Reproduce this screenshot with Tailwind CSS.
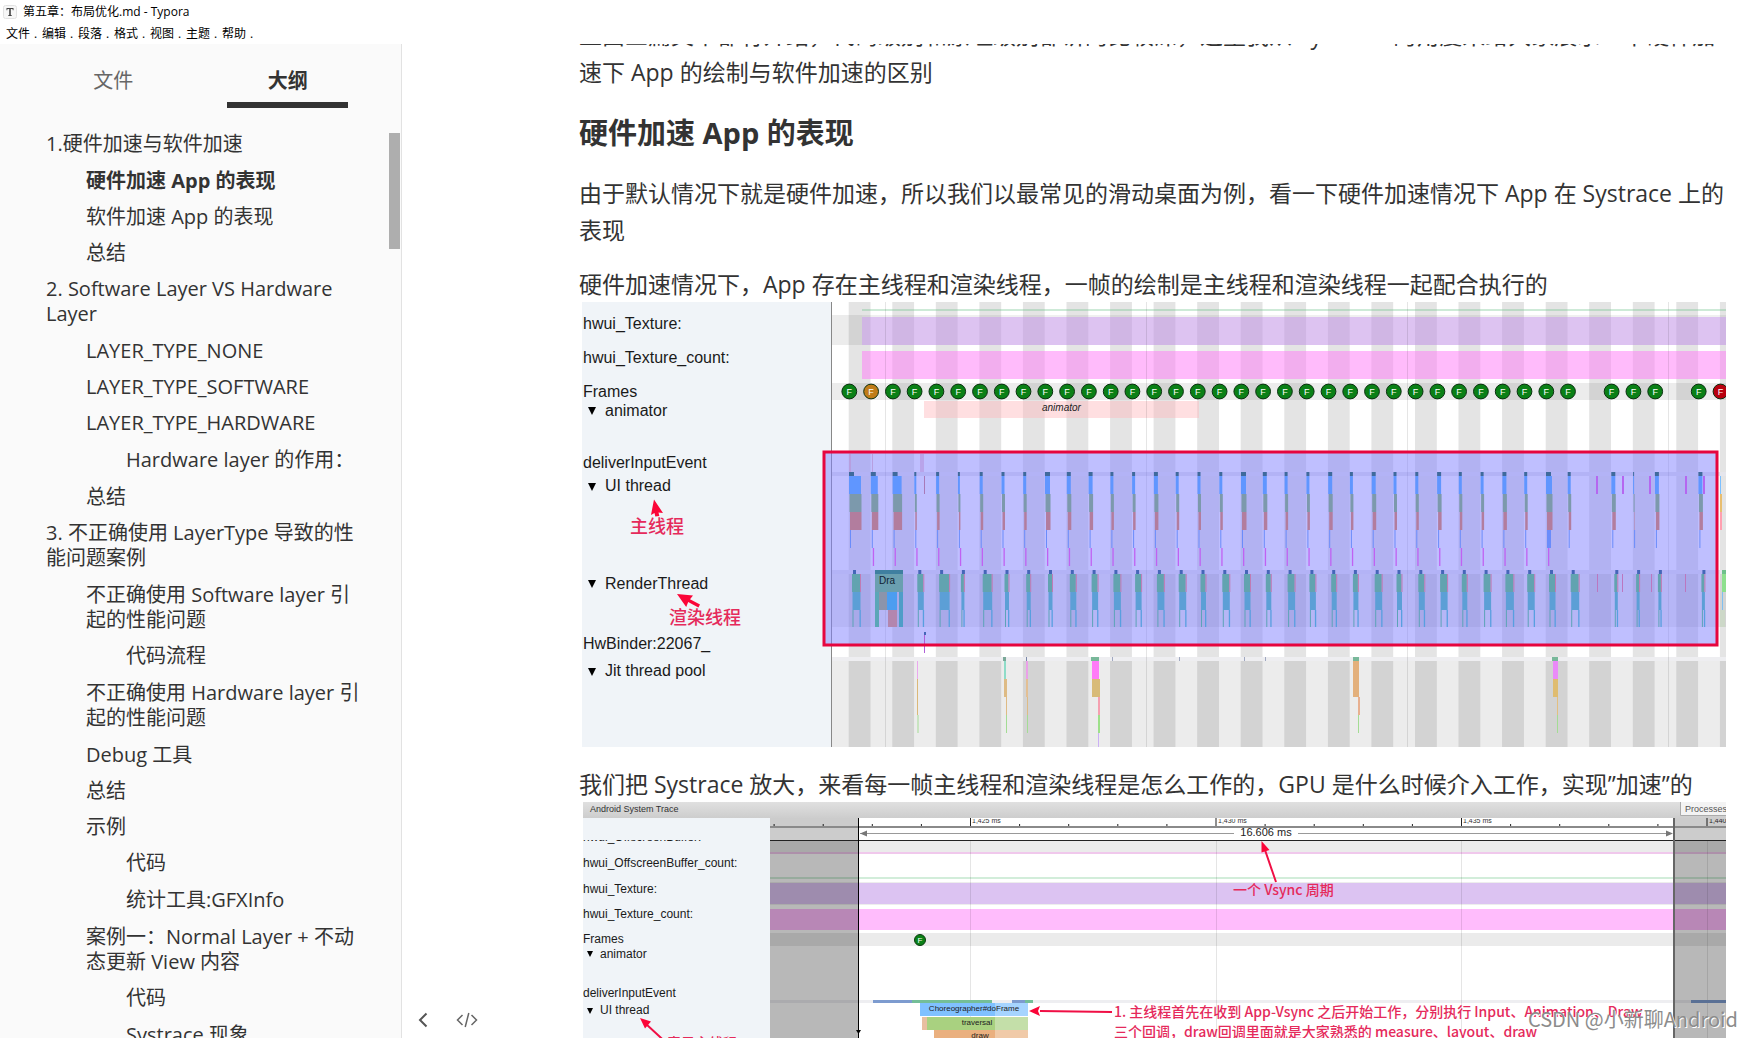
<!DOCTYPE html>
<html lang="zh-CN">
<head>
  <meta charset="UTF-8" />
  <meta name="viewport" content="width=device-width, initial-scale=1.0" />
  <title>第五章：布局优化.md - Typora</title>
  <script src="https://cdn.jsdelivr.net/npm/@tailwindcss/browser@4"></script>
</head>
<body class="bg-white h-screen flex flex-col overflow-hidden text-[#333] font-['Open_Sans','Noto_Sans_CJK_SC',sans-serif]">
  <!-- Title bar + menu -->
  <header class="text-black text-xs">
    <div class="h-6 flex items-center gap-1.5 pl-[3px]">
      <svg class="w-3.5 h-3.5" viewBox="0 0 14 14" aria-hidden="true">
        <rect x=".5" y=".5" width="13" height="13" rx="2" fill="#f7f7f7" stroke="#e2e2e2" />
        <path d="M3.5 3h7v2.2h-.7L9.500 4H7.800v6l1 .3v.7H5.200v-.7l1-.3V4H4.500l-.3 1.200h-.7z" fill="#444" />
      </svg>
      <span>第五章：布局优化.md - Typora</span>
    </div>
    <nav class="h-5 flex items-center pl-1.5">
      <button class="w-9 text-left whitespace-nowrap">文件<span class="pl-1">.</span></button>
      <button class="w-9 text-left whitespace-nowrap">编辑<span class="pl-1">.</span></button>
      <button class="w-9 text-left whitespace-nowrap">段落<span class="pl-1">.</span></button>
      <button class="w-9 text-left whitespace-nowrap">格式<span class="pl-1">.</span></button>
      <button class="w-9 text-left whitespace-nowrap">视图<span class="pl-1">.</span></button>
      <button class="w-9 text-left whitespace-nowrap">主题<span class="pl-1">.</span></button>
      <button class="w-9 text-left whitespace-nowrap">帮助<span class="pl-1">.</span></button>
    </nav>
  </header>

  <div class="flex-1 min-h-0 flex">
    <!-- Sidebar -->
    <aside class="relative w-[402px] shrink-0 bg-[#fafafa] border-r border-[#e2e2e2] overflow-hidden text-xl leading-[25px]">
      <div class="flex px-[26px] pt-6">
        <button class="flex-1 text-[#666] pb-5">文件</button>
        <button class="flex-1 font-bold flex flex-col items-center">
          <span class="pb-[9px]">大纲</span>
          <span class="w-[121px] h-1.5 bg-[#333]"></span>
        </button>
      </div>
      <ul class="pt-3 pl-[46px] whitespace-nowrap">
        <li class="py-1.5"><a href="#a1">1.硬件加速与软件加速</a></li>
        <li class="pt-1.5 pb-[5px] pl-10 font-bold"><a href="#a2">硬件加速 App 的表现</a></li>
        <li class="pt-1.5 pb-[5px] pl-10"><a href="#a3">软件加速 App 的表现</a></li>
        <li class="pt-1.5 pb-[5px] pl-10"><a href="#a4">总结</a></li>
        <li class="py-1.5"><a href="#b1">2. Software Layer VS Hardware<br />Layer</a></li>
        <li class="pt-1.5 pb-[5px] pl-10"><a href="#b2">LAYER_TYPE_NONE</a></li>
        <li class="pt-1.5 pb-[5px] pl-10"><a href="#b3">LAYER_TYPE_SOFTWARE</a></li>
        <li class="py-1.5 pl-10"><a href="#b4">LAYER_TYPE_HARDWARE</a></li>
        <li class="py-1.5 pl-20"><a href="#b5">Hardware layer 的作用：</a></li>
        <li class="pt-1.5 pb-[5px] pl-10"><a href="#b6">总结</a></li>
        <li class="py-1.5"><a href="#c1">3. 不正确使用 LayerType 导致的性<br />能问题案例</a></li>
        <li class="pt-1.5 pb-[5px] pl-10"><a href="#c2">不正确使用 Software layer 引<br />起的性能问题</a></li>
        <li class="py-1.5 pl-20"><a href="#c3">代码流程</a></li>
        <li class="py-1.5 pl-10"><a href="#c4">不正确使用 Hardware layer 引<br />起的性能问题</a></li>
        <li class="pt-1.5 pb-[5px] pl-10"><a href="#c5">Debug 工具</a></li>
        <li class="pt-1.5 pb-[5px] pl-10"><a href="#c6">总结</a></li>
        <li class="pt-1.5 pb-[5px] pl-10"><a href="#c7">示例</a></li>
        <li class="py-1.5 pl-20"><a href="#c8">代码</a></li>
        <li class="py-1.5 pl-20"><a href="#c9">统计工具:GFXInfo</a></li>
        <li class="pt-1.5 pb-[5px] pl-10"><a href="#d1">案例一：Normal Layer + 不动<br />态更新 View 内容</a></li>
        <li class="py-1.5 pl-20"><a href="#d2">代码</a></li>
        <li class="py-1.5 pl-20"><a href="#d3">Systrace 现象</a></li>
      </ul>
      <!-- scrollbar thumb -->
      <div class="absolute right-px top-[89px] w-[11px] h-[116px] bg-[#aeaeae]"></div>
    </aside>

    <!-- Editor -->
    <main class="relative flex-1 min-w-0 overflow-hidden pl-[177px] pr-[26px]">
      <article class="-mt-[27px] text-[23px] leading-[37px]">
        <p>上面三篇文章都有介绍，代码级别和原理级别都讲的比较深，这里我从 Systrace 的角度来给大家展示一下硬件加速下 App 的绘制与软件加速的区别</p>
        <h3 id="a2" class="mt-[22px] text-[29px] leading-10 font-bold">硬件加速 App 的表现</h3>
        <p class="mt-[22px]">由于默认情况下就是硬件加速，所以我们以最常见的滑动桌面为例，看一下硬件加速情况下 App 在 Systrace 上的表现</p>
        <p class="mt-5 pb-0.5 leading-[31px]">硬件加速情况下，App 存在主线程和渲染线程，一帧的绘制是主线程和渲染线程一起配合执行的</p>

        <div class="pl-[3px]">
          <svg class="block w-full font-['Liberation_Sans',sans-serif]" viewBox="582 302 1144 445" font-size="16">
            <rect x="582" y="302" width="1144" height="445" fill="#fff" />
            <g id="stripes" fill="#e4e4e4"></g>
            <!-- counters and frame row -->
            <g fill="#000" fill-opacity=".075">
              <rect x="832" y="315" width="30" height="30" />
              <rect x="832" y="383" width="894" height="17" />
            </g>
            <rect x="862" y="309" width="864" height="2" fill="#6fc38c" fill-opacity=".35" />
            <rect x="862" y="315" width="864" height="2" fill="#000" fill-opacity=".06" />
            <rect x="862" y="317" width="864" height="28" fill="#bc88e4" fill-opacity=".5" />
            <rect x="862" y="351" width="864" height="28" fill="#ff78f7" fill-opacity=".5" />
            <rect x="924" y="401" width="275" height="17" fill="#ffb9bd" fill-opacity=".45" />
            <text x="1042" y="411" font-size="10" font-style="italic" fill="#222">animator</text>
            <!-- thread rows -->
            <rect x="832" y="472" width="894" height="4" fill="#e6e6ec" />
            <rect x="832" y="570" width="894" height="57" fill="#000" fill-opacity=".075" />
            <rect x="832" y="570" width="894" height="4" fill="#e6e6ec" />
            <rect x="832" y="657" width="894" height="90" fill="#000" fill-opacity=".075" />
            <rect x="832" y="657" width="894" height="4" fill="#eeeef1" />
            <g id="gridlines" fill="#000" fill-opacity=".1"></g>
            <g id="jit"></g>
            <rect x="582" y="302" width="249" height="445" fill="#f0f4f8" />
            <rect x="831" y="302" width="1" height="445" fill="#888" />
            <rect x="824" y="452" width="893" height="193" fill="#8080ff" fill-opacity=".5" />
            <g id="slices"></g>
            <text x="879" y="584" font-size="10" fill="#123">Dra</text>
            <rect x="824" y="452" width="893" height="193" fill="none" stroke="#e6053f" stroke-width="3" />
            <g id="frames" font-size="9" text-anchor="middle"></g>
            <g fill="#1a1a1a">
              <text x="583" y="329">hwui_Texture:</text>
              <text x="583" y="363">hwui_Texture_count:</text>
              <text x="583" y="397">Frames</text>
              <text x="605" y="416">animator</text>
              <text x="583" y="468">deliverInputEvent</text>
              <text x="605" y="491">UI thread</text>
              <text x="605" y="589">RenderThread</text>
              <text x="583" y="649">HwBinder:22067_</text>
              <text x="605" y="676">Jit thread pool</text>
            </g>
            <path d="M588 407h8l-4 8zM588 483h8l-4 8zM588 580h8l-4 8zM588 668h8l-4 8z" fill="#000" />
            <g fill="#fb0538">
              <path d="M654 499.500l9 13.500-4.500-.5.800 3.500-4 .5-.8-3.500-3.500 2z" />
              <path d="M677 594l16 1.500-3 3.700 10 5.300-1.600 3-10.200-5.400-2 5z" />
            </g>
            <g fill="#e52a5b" font-size="18" class="font-medium font-['Noto_Sans_CJK_SC',sans-serif]">
              <text x="630" y="533">主线程</text>
              <text x="669" y="624">渲染线程</text>
            </g>
          </svg>
        </div>

        <p class="mt-[22px] pb-0.5 leading-[31px]">我们把 Systrace 放大，来看每一帧主线程和渲染线程是怎么工作的，GPU 是什么时候介入工作，实现”加速”的</p>

        <div class="pl-1">
          <svg class="block w-full font-['Liberation_Sans',sans-serif]" viewBox="583 802 1143 260" font-size="12">
            <defs>
              <linearGradient id="bar" x1="0" y1="0" x2="0" y2="1">
                <stop offset="0" stop-color="#e0e0e0" />
                <stop offset="1" stop-color="#cdcdcd" />
              </linearGradient>
              <clipPath id="underRuler"><rect x="583" y="840" width="190" height="10" /></clipPath>
              <clipPath id="ruler"><rect x="770" y="819" width="956" height="9" /></clipPath>
            </defs>
            <rect x="583" y="802" width="1143" height="260" fill="#fff" />
            <rect x="770" y="841" width="956" height="11" fill="#ebebeb" />
            <rect x="770" y="852" width="956" height="2" fill="#f0c8ec" />
            <rect x="770" y="877" width="956" height="2" fill="#d2edda" />
            <rect x="770" y="882" width="956" height="23" fill="#ededed" />
            <rect x="770" y="883" width="956" height="21" fill="#dcc3f2" />
            <rect x="770" y="909" width="956" height="21" fill="#ffbcfc" />
            <rect x="770" y="933" width="956" height="13" fill="#ebebeb" />
            <rect x="770" y="1000" width="956" height="3" fill="#eeeef1" />
            <path d="M970.500 841v221M1216.500 841v221M1461.500 841v221M1707.500 841v221" stroke="#000" stroke-opacity=".1" />
            <!-- main thread slices -->
            <path d="M873 1000h39v3h-39zM1012 1000h13v3h-13zM1691 1000h35v3h-35z" fill="#7d9bcf" />
            <path d="M912 1000h80v3h-80zM1025 1000h8v3h-8z" fill="#74be98" />
            <rect x="920" y="1003" width="108" height="13" fill="#80c1ff" />
            <rect x="995" y="1003" width="33" height="13" fill="#a6d4ff" />
            <rect x="922" y="1017" width="5" height="13" fill="#e8bfa0" />
            <rect x="927" y="1017" width="101" height="13" fill="#a9d180" />
            <rect x="995" y="1017" width="33" height="13" fill="#c4dfa9" />
            <rect x="934" y="1030" width="94" height="32" fill="#eab07f" />
            <rect x="995" y="1030" width="33" height="32" fill="#f0caa8" />
            <g font-size="8" text-anchor="middle" fill="#222">
              <text x="974" y="1011">Choreographer#doFrame</text>
              <text x="977" y="1025">traversal</text>
              <text x="980" y="1038">draw</text>
            </g>
            <circle cx="920" cy="940" r="5.500" fill="#0a8016" stroke="#0b3d10" />
            <text x="920" y="943" font-size="8" text-anchor="middle" fill="#fff">F</text>
            <!-- ruler -->
            <g id="ticks" fill="#222"></g>
            <g font-size="7" fill="#333" clip-path="url(#ruler)">
              <text x="972" y="823">1,425 ms</text>
              <text x="1218" y="823">1,430 ms</text>
              <text x="1463" y="823">1,435 ms</text>
              <text x="1709" y="823">1,440 ms</text>
            </g>
            <path d="M860 833.500h374M1298 833.500h374" stroke="#999" />
            <path d="M860 833.500l7-3v6zM1673 833.500l-7-3v6z" fill="#777" />
            <text x="1266" y="836" font-size="11" text-anchor="middle" fill="#222">16.606 ms</text>
            <!-- dimmed area outside the selection -->
            <path d="M770 818h88v22h-88zM1674 818h52v22h-52z" fill="#000" fill-opacity=".2" />
            <path d="M770 841h88v221h-88zM1674 841h52v221h-52z" fill="#000" fill-opacity=".28" />
            <rect x="770" y="826" width="956" height="2" fill="#8a8a8a" />
            <rect x="770" y="840" width="956" height="1" fill="#222" />
            <rect x="858" y="818" width="1" height="244" fill="#000" />
            <path d="M856 1030h5l-2.500 4z" fill="#000" />
            <rect x="1673" y="818" width="2" height="244" fill="#666" />
            <rect x="583" y="818" width="187" height="244" fill="#f0f4f8" />
            <rect x="583" y="802" width="1143" height="16" fill="url(#bar)" />
            <text x="590" y="812" font-size="9" fill="#333">Android System Trace</text>
            <path d="M1680.500 802v13.500h46" fill="#f3f3f3" stroke="#aaa" />
            <rect x="1681" y="802" width="45" height="13" fill="#f3f3f3" />
            <text x="1685" y="812" font-size="9" fill="#555">Processes</text>
            <g fill="#1a1a1a">
              <text x="583" y="841" clip-path="url(#underRuler)">hwui_OffscreenBuffer:</text>
              <text x="583" y="867">hwui_OffscreenBuffer_count:</text>
              <text x="583" y="893">hwui_Texture:</text>
              <text x="583" y="918">hwui_Texture_count:</text>
              <text x="583" y="943">Frames</text>
              <text x="600" y="958">animator</text>
              <text x="583" y="997">deliverInputEvent</text>
              <text x="600" y="1014">UI thread</text>
            </g>
            <path d="M587 951h6l-3 6zM587 1008h6l-3 6z" fill="#000" />
            <g stroke="#f00f45" stroke-width="2">
              <path d="M646 1024l26 24M1265 850l11 32M1040 1011l72 1" />
            </g>
            <path d="M640 1018l11 3.500-6 7zM1261.500 841l8 9-8 2.500zM1029 1011l11-5-2 5 2 5z" fill="#fb0538" />
            <g fill="#e52a5b" font-size="14" class="font-medium font-['Noto_Sans_CJK_SC',sans-serif]">
              <text x="667" y="1048">表示主线程</text>
              <text x="1233" y="895">一个 Vsync 周期</text>
              <text x="1114" y="1017">1. 主线程首先在收到 App-Vsync 之后开始工作，分别执行 Input、Animation、Draw</text>
              <text x="1114" y="1037">三个回调，draw回调里面就是大家熟悉的 measure、layout、draw</text>
            </g>
          </svg>
        </div>
      </article>

      <!-- Footer buttons -->
      <div class="absolute left-[15px] bottom-2.5 flex gap-[27px]">
        <button aria-label="隐藏侧边栏">
          <svg class="w-3 h-4" viewBox="0 0 12 16" fill="none" stroke="#555" stroke-width="2"><path d="M9.500 1.500L3 8l6.500 6.500" /></svg>
        </button>
        <button aria-label="源代码模式">
          <svg class="w-[22px] h-4" viewBox="0 0 22 16" fill="none" stroke="#666" stroke-width="1.500"><path d="M6.500 3L1.500 8l5 5M15.500 3l5 5-5 5M12.800 1L9.200 15" /></svg>
        </button>
      </div>
      <div class="absolute right-[14px] bottom-1 text-xl leading-[30px] text-[#8c8c8c] [text-shadow:1px_1px_0_#fff] whitespace-nowrap font-['Noto_Sans_CJK_SC',sans-serif]">CSDN @小新聊Android</div>
    </main>
  </div>

  <script>
    const rect = (x, y, w, h, fill, extra = "") =>
      `<rect x="${x.toFixed(1)}" y="${y}" width="${w}" height="${h}" ${fill ? `fill="${fill}"` : ""} ${extra}/>`;
    const put = (id, html) => { document.getElementById(id).innerHTML = html; };

    // Vsync stripes and grid lines
    let out = "";
    for (let i = 0; i <= 20; i++) out += rect(848.7 + i * 43.56, 302, 21.8, 445);
    put("stripes", out);
    put("gridlines", [885, 1146, 1407, 1668].map(x => rect(x, 302, 1, 445)).join(""));

    // Frame markers
    out = "";
    const step = 21.78;
    for (let i = 0; i <= 40; i++) {
      if ([34, 38].includes(i)) continue;
      const x = 849.3 + i * step;
      const color = i === 1 ? "#c07c18" : i === 40 ? "#b8000f" : "#0a8016";
      out += `<circle cx="${x.toFixed(1)}" cy="391.500" r="7.400" fill="${color}" stroke="#0b3010" /><text x="${x.toFixed(1)}" y="394.500" fill="#fff">F</text>`;
    }
    put("frames", out);

    // UI thread widths, one entry for each frame (0 = dropped)
    const ui = [12, 7, 9, 2, 3, 2, 3, 3, 3, 5, 4, 4, 3, 3, 4, 3, 3, 3, 5, 4, 3, 3, 4, 3, 4, 3, 3, 4, 3, 3, 4, 3, 6, 3, 0, 4, 1, 4, 0, 4];
    const rt = [8, 0, 0, 6, 10, 3, 9, 4, 4, 4, 6, 6, 7, 6, 7, 7, 5, 7, 6, 5, 7, 6, 5, 5, 7, 5, 6, 7, 5, 7, 8, 7, 6, 8, 0, 3, 3, 3, 0, 3];
    out = "";
    ui.forEach((w, i) => {
      if (!w) return;
      const x = 849 + i * step;
      out += rect(x, 472, Math.min(w, 5), 4, "#3f6a9c");
      out += rect(x, 476, w, 18, "#6096ff");
      out += rect(x + .5, 494, w, 18, "#7c99ac");
      out += rect(x + 1, 512, w - .5, 18, "#b27d9e");
      out += rect(x + 1, 530, i === 32 ? 4 : 1, 18, "#6a8cfb");
      if (i && i < 33) out += rect(x + 2, 548, 1.3, 18, "#c062f2");
      const r = rt[i];
      if (!r) return;
      const rx = x + 3;
      out += rect(rx + 1, 570, 3, 4, "#4566b8");
      out += rect(rx, 574, r, 18, "#62a3b0");
      out += rect(rx + r, 574, 1, 18, "#c07bb4");
      out += rect(rx + .5, 592, r, 18, "#5c9fd6");
      out += rect(rx + .5, 610, 1, 17, "#5da3b8");
      out += rect(rx + r - .5, 610, 1.3, 17, "#589fe0");
    });
    // long first draw
    out += rect(875, 570, 28, 4, "#3f7fa0") + rect(875, 574, 28, 18, "#6a9fb0") + rect(875, 592, 4, 35, "#5ba6b8")
      + rect(879, 592, 8, 18, "#8c94ab") + rect(887, 592, 10, 18, "#4c9df0") + rect(888, 610, 9, 17, "#b386ae")
      + rect(899, 592, 4, 35, "#4f9dc8");
    // input slices
    out += [[1596, 476], [1622, 476], [1649, 476], [1685, 476], [1703, 476]].map(([x, y]) => rect(x, y, 2, 18, "#b567f0")).join("");
    out += [1597, 1622, 1651, 1685].map(x => rect(x, 574, 1, 18, "#bb77c0")).join("");
    out += rect(849, 454, 2, 18, "#b79fe0") + rect(872, 454, 1, 18, "#b79fe0") + rect(920, 454, 4, 18, "#b9a4ea") + rect(924, 476, 1, 18, "#a87ab8");
    out += rect(924, 632, 2, 3, "#4566b8") + rect(924, 635, 1, 18, "#b060d8");
    // slices right of the selection
    out += rect(1720, 476, 1, 18, "#7cc0ff") + rect(1720, 494, 2, 18, "#e8be70") + rect(1720, 512, 2, 18, "#ffa0b0")
      + rect(1722, 570, 4, 4, "#6fc08c") + rect(1722, 574, 4, 18, "#8ee08e") + rect(1722, 592, 1, 18, "#80c0f0") + rect(1720, 610, 5, 17, "#cdd8c8");
    put("slices", out);

    // Jit thread pool: [x, y, w, h, color]
    put("jit", [
      [917, 661, 1, 18, "#eaa8ee"], [917, 679, 1, 36, "#dbb878"], [917.5, 715, 1, 18, "#a4dc94"],
      [1003, 657, 3, 4, "#7aa898"], [1004, 661, 2, 18, "#8fdcc8"], [1004, 679, 3, 18, "#debb85"], [1006, 697, 1, 18, "#debb85"], [1006, 715, 1, 18, "#a4dc94"],
      [1026, 657, 1, 4, "#7a88a8"], [1026, 661, 2, 18, "#eaa0e8"], [1026, 679, 2, 18, "#e3bf93"], [1027, 697, 1, 18, "#debb85"], [1027, 715, 1, 18, "#a4dc94"],
      [1091, 657, 8, 4, "#78b89a"], [1092, 661, 7, 18, "#ff7af8"], [1092, 679, 8, 18, "#d8bb78"], [1098, 697, 2, 18, "#f5a0b0"], [1098, 715, 2, 18, "#9de08a"], [1098, 733, 1, 14, "#cbb0f5"],
      [1112, 657, 1, 4, "#a0a8c0"], [1179, 657, 1, 4, "#a0a8c0"], [1244, 657, 1, 4, "#a0a8c0"], [1265, 657, 1, 4, "#a0a8c0"],
      [1353, 657, 6, 4, "#78b89a"], [1353, 661, 6, 36, "#e3b07c"], [1358, 697, 2, 18, "#e8b090"], [1358, 715, 1, 18, "#a4dc94"],
      [1552, 657, 6, 4, "#78b89a"], [1553, 661, 5, 18, "#ea8af8"], [1553, 679, 5, 18, "#dfbc70"], [1557, 697, 1, 18, "#e3bf80"], [1557, 715, 1, 18, "#a4dc94"]
    ].map(a => rect(...a)).join(""));

    // Ruler ticks every millisecond, long ones every five
    out = "";
    for (let i = -4; i <= 15; i++) {
      const major = i % 5 === 0;
      out += rect(970 + i * 49.1, major ? 818 : 824, 1, major ? 9 : 3);
    }
    put("ticks", out);
  </script>
</body>
</html>
